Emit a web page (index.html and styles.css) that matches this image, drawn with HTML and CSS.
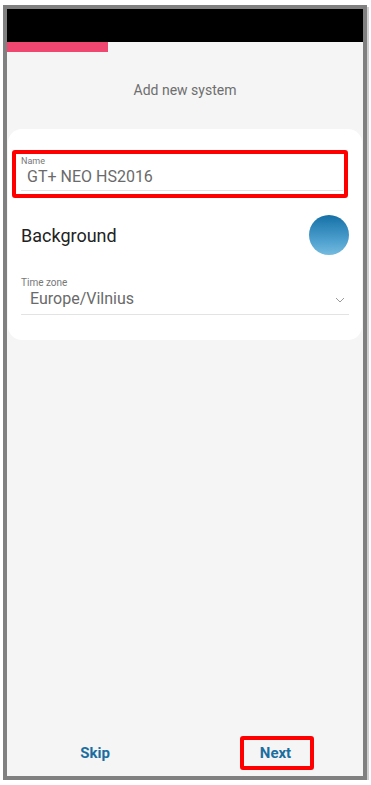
FILE: index.html
```html
<!DOCTYPE html>
<html lang="en">
<head>
  <meta charset="UTF-8" />
  <meta name="viewport" content="width=device-width, initial-scale=1.0"/>
  <title>Add new system</title>
  <link rel="stylesheet" href="styles.css">
</head>
<body>
  <div class="phone">
    <div class="status-bar"></div>
    <div class="progress"><div class="progress-fill"></div></div>

    <h1 class="title">Add new system</h1>

    <div class="card">
      <div class="highlight">
        <div class="field">
          <label class="field-label">Name</label>
          <div class="field-value name-value">GT+ NEO HS2016</div>
        </div>
      </div>

      <div class="bg-row">
        <span class="bg-label">Background</span>
        <span class="bg-swatch"></span>
      </div>

      <div class="field tz-field">
        <label class="field-label tz-label">Time zone</label>
        <div class="field-value tz-value">
          <span>Europe/Vilnius</span>
          <svg class="chevron" width="10" height="6" viewBox="0 0 10 6">
            <path d="M1 1 L5 5 L9 1" fill="none" stroke="#9a9a9a" stroke-width="1"/>
          </svg>
        </div>
      </div>
    </div>

    <div class="footer">
      <button class="btn">Skip</button>
      <button class="btn btn-next">Next</button>
    </div>
  </div>
</body>
</html>
```
FILE: styles.css
```css
* { box-sizing: border-box; }

body {
  margin: 0;
  background: #ffffff;
  font-family: Roboto, "Liberation Sans", sans-serif;
}

/* Marco del teléfono */
.phone {
  margin: 5px 0 0 3px;
  width: 364px;
  height: 775px;
  border: 4px solid #808080;
  background: #f5f5f5;
  display: flex;
  flex-direction: column;
  box-shadow: 2px 2px 0 #d0d0d0;
}

.status-bar {
  height: 33px;
  background: #000;
}

.progress {
  height: 10px;
}

.progress-fill {
  width: 101px;
  height: 100%;
  background: #ef4770;
}

.title {
  margin: 29px 0 0;
  font-size: 14px;
  font-weight: normal;
  line-height: 18px;
  color: #6e6e6e;
  text-align: center;
}

/* Tarjeta */
.card {
  margin: 30px 1px 0 1px;
  background: #fff;
  border-radius: 14px;
  padding: 21px 0 25px;
}

.highlight {
  margin: 0 14px 0 4px;
  border: 4px solid #ff0000;
  border-radius: 3px;
  padding: 2px 1px 3px 5px;
}

.field {
  border-bottom: 1px solid #e3e3e3;
  padding-bottom: 3px;
}

.field-label {
  display: block;
  font-size: 9px;
  line-height: 11px;
  color: #777;
}

.field-value {
  font-size: 16px;
  line-height: 20px;
  color: #6a6a6a;
}

.name-value {
  padding-left: 6px;
}

.bg-row {
  display: flex;
  align-items: center;
  justify-content: space-between;
  padding: 0 13px 0 13px;
  margin-top: 17px;
}

.bg-label {
  font-size: 18px;
  color: #222;
}

.bg-swatch {
  width: 40px;
  height: 40px;
  border-radius: 50%;
  background: linear-gradient(180deg, #1570a6 0%, #4a9dcc 60%, #74bbe0 100%);
}

.tz-field {
  margin: 21px 13px 0 13px;
  padding-bottom: 5px;
}

.tz-label {
  font-size: 10px;
  line-height: 13px;
}

.tz-value {
  display: flex;
  align-items: center;
  justify-content: space-between;
  padding: 0 4px 0 9px;
}

.chevron {
  margin-top: 2px;
}

/* Botones inferiores */
.footer {
  margin-top: auto;
  display: flex;
  justify-content: space-between;
  padding: 0 49px 6px 62px;
}

.btn {
  background: none;
  border: none;
  font-family: inherit;
  font-size: 15px;
  font-weight: bold;
  color: #1b6e9f;
  padding: 0;
  height: 34px;
  width: 52px;
  cursor: pointer;
}

.btn-next {
  width: 74px;
  border: 4px solid #ff0000;
  border-radius: 3px;
  padding-right: 3px;
}
```
